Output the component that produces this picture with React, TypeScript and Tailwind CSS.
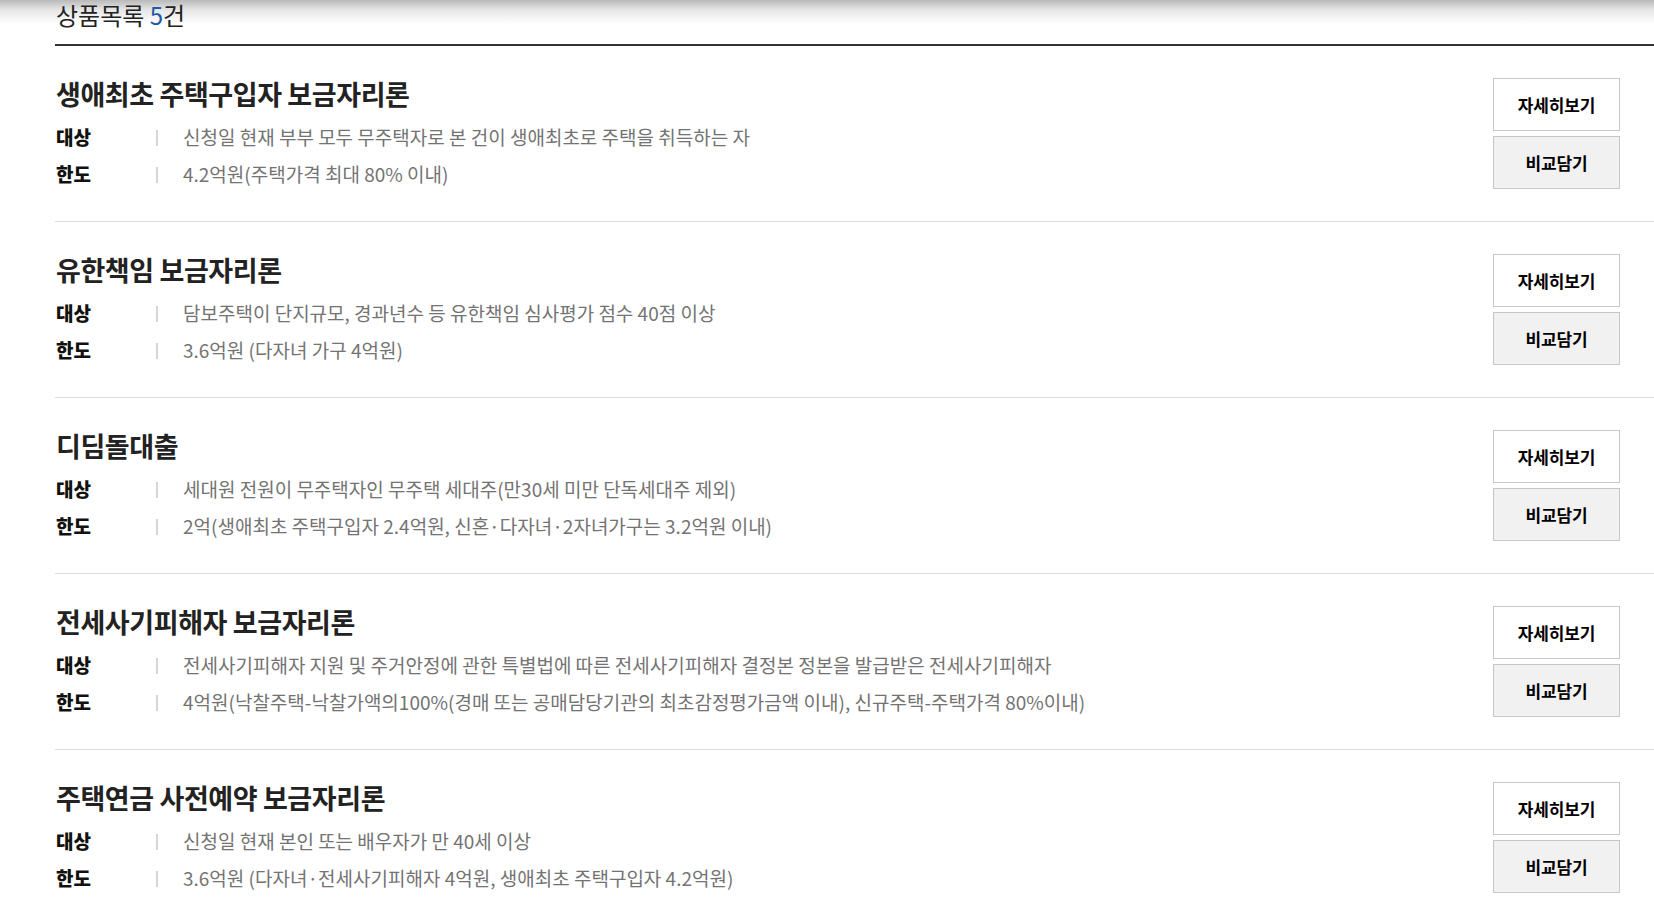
const products = [
  {
    title: '생애최초 주택구입자 보금자리론',
    target: '신청일 현재 부부 모두 무주택자로 본 건이 생애최초로 주택을 취득하는 자',
    limit: '4.2억원(주택가격 최대 80% 이내)',
  },
  {
    title: '유한책임 보금자리론',
    target: '담보주택이 단지규모, 경과년수 등 유한책임 심사평가 점수 40점 이상',
    limit: '3.6억원 (다자녀 가구 4억원)',
  },
  {
    title: '디딤돌대출',
    target: '세대원 전원이 무주택자인 무주택 세대주(만30세 미만 단독세대주 제외)',
    limit: '2억(생애최초 주택구입자 2.4억원, 신혼·다자녀·2자녀가구는 3.2억원 이내)',
  },
  {
    title: '전세사기피해자 보금자리론',
    target: '전세사기피해자 지원 및 주거안정에 관한 특별법에 따른 전세사기피해자 결정본 정본을 발급받은 전세사기피해자',
    limit: '4억원(낙찰주택-낙찰가액의100%(경매 또는 공매담당기관의 최초감정평가금액 이내), 신규주택-주택가격 80%이내)',
  },
  {
    title: '주택연금 사전예약 보금자리론',
    target: '신청일 현재 본인 또는 배우자가 만 40세 이상',
    limit: '3.6억원 (다자녀·전세사기피해자 4억원, 생애최초 주택구입자 4.2억원)',
  },
]

function InfoRow({ label, value }: { label: string; value: string }) {
  return (
    <div className="flex h-[37px] items-center">
      <span className="w-[100px] text-[19px] font-black text-[#111]">{label}</span>
      <span className="h-[16px] w-[2px] bg-[#d6d6d6]" />
      <span className="ml-[25px] text-[19px] text-[#737373]">{value}</span>
    </div>
  )
}

export default function App() {
  return (
    <div
      className="min-h-screen w-full bg-white"
      style={{ fontFamily: '"Noto Sans CJK KR", "Noto Sans", sans-serif' }}
    >
      <div className="h-[44px] bg-[linear-gradient(to_bottom,#b9b9b9_0px,#e6e6e6_10px,#ffffff_24px)] pl-[56px]">
        <h2 className="text-[24px] leading-[29px] text-[#222]">
          상품목록 <span className="text-[#1d5aa7]">5</span>건
        </h2>
      </div>
      <div className="ml-[55px] border-t-2 border-[#333]">
        {products.map((p) => (
          <div key={p.title} className="flex items-start justify-between border-b border-[#dedede] pb-[28px] pl-px pr-[34px] pt-[32px]">
            <div>
              <h3 className="text-[27px] font-bold leading-[32px] tracking-[-0.015em] text-[#222]">{p.title}</h3>
              <div className="mt-[9px]">
                <InfoRow label="대상" value={p.target} />
                <InfoRow label="한도" value={p.limit} />
              </div>
            </div>
            <div className="flex flex-col gap-[5px]">
              <button className="h-[53px] w-[127px] border border-[#c6c6cb] bg-white text-[17px] font-bold tracking-[-0.01em] text-black">
                자세히보기
              </button>
              <button className="h-[53px] w-[127px] border border-[#c6c6cb] bg-[#f1f1f1] text-[17px] font-bold tracking-[-0.01em] text-black">
                비교담기
              </button>
            </div>
          </div>
        ))}
      </div>
    </div>
  )
}
